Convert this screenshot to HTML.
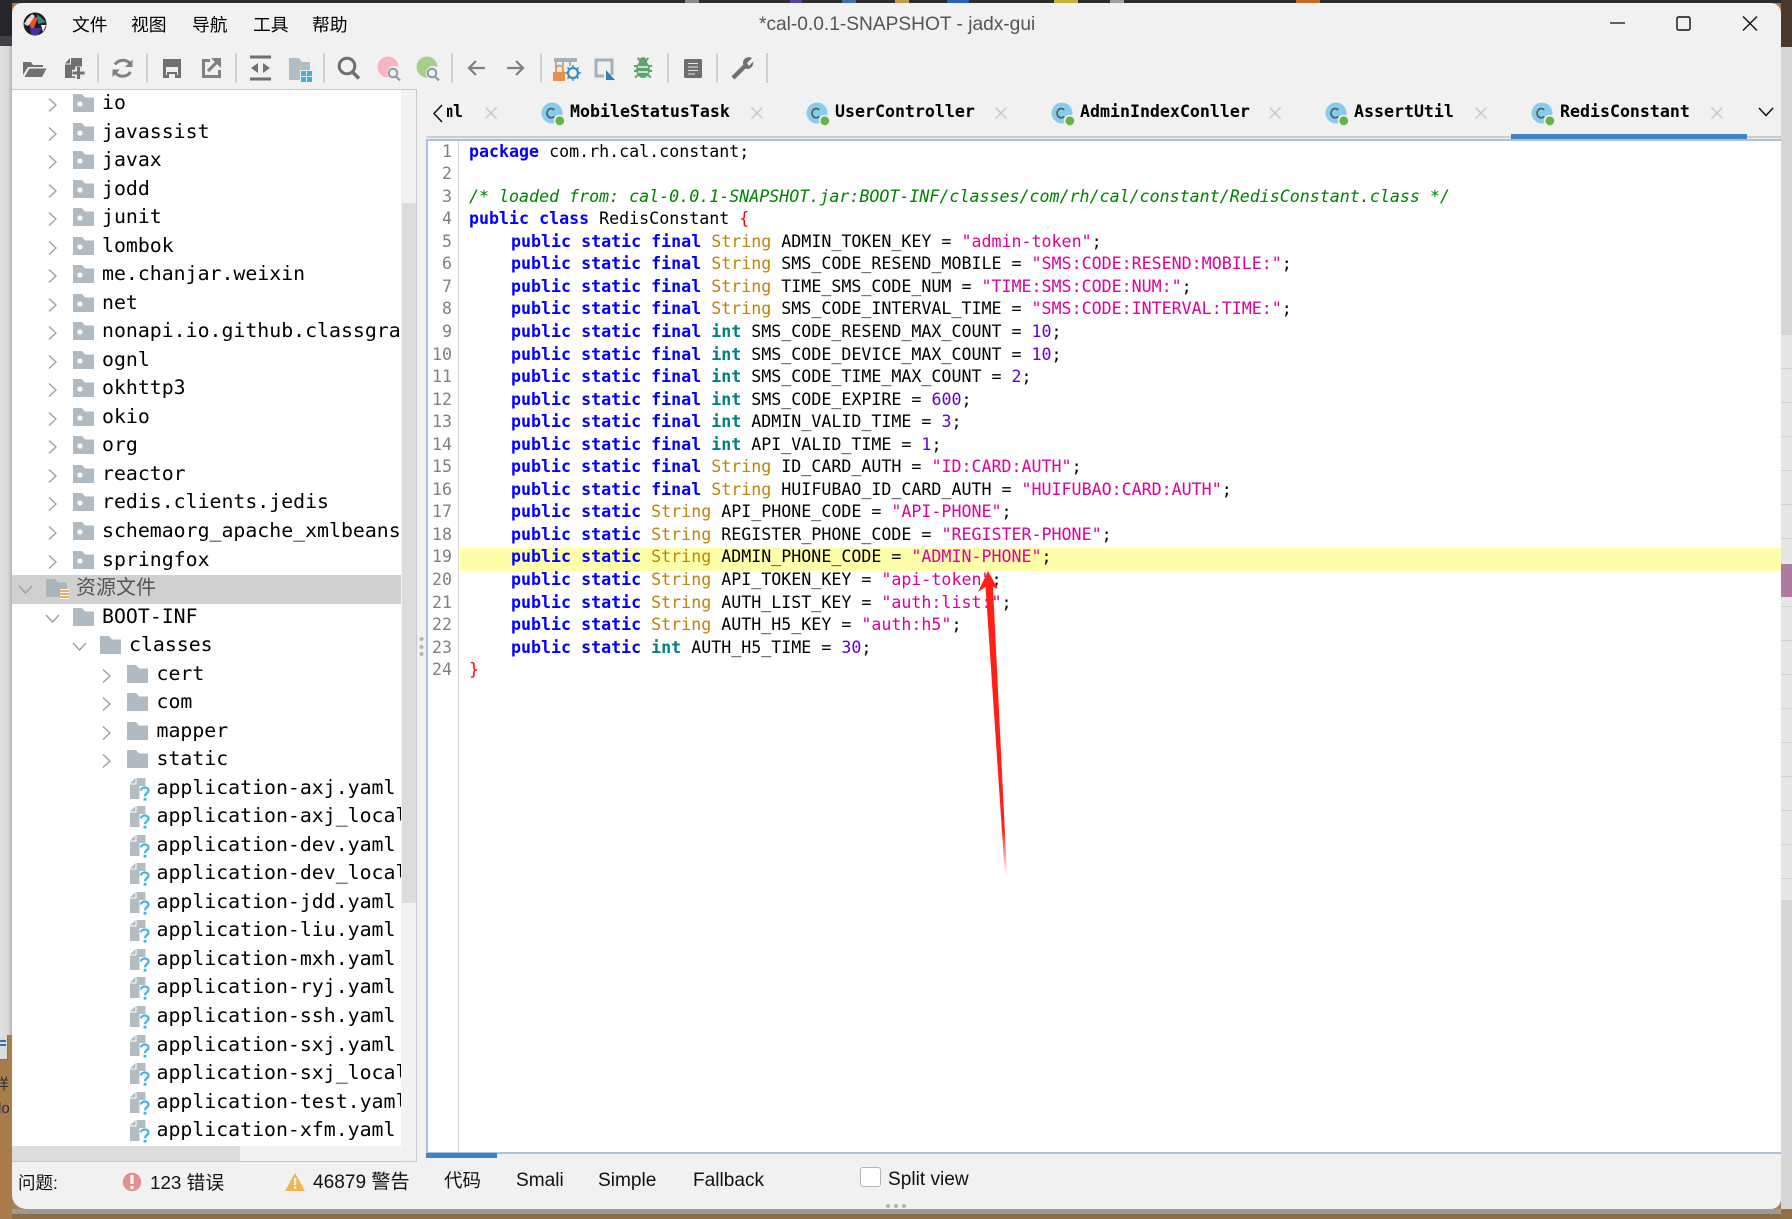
<!DOCTYPE html>
<html><head><meta charset="utf-8"><title>jadx-gui</title>
<style>
*{box-sizing:border-box}
html,body{margin:0;padding:0;width:1792px;height:1219px;overflow:hidden;background:#a97c4c}
body{position:relative;font-family:"Liberation Sans","Noto Sans CJK SC",sans-serif}
.a{position:absolute}
.t{position:absolute;white-space:pre;line-height:24px;color:#000}
#win{position:absolute;left:12px;top:3px;width:1769px;height:1206px;background:#f1f1f1;border-radius:10px 10px 10px 14px;overflow:hidden}
.m{font-size:17.8px;top:13px}
#tree{position:absolute;left:12px;top:90px;width:389px;height:1056px;background:#fff;overflow:hidden;font-family:"DejaVu Sans Mono",monospace;font-size:19.85px}
.r{position:absolute;left:0;width:389px;height:29px;line-height:29.4px;white-space:pre;color:#000}
.r span{position:absolute;top:0}
.r svg{position:absolute;top:0;left:0;width:160px;height:29px;overflow:visible}
#code{position:absolute;left:0;top:0.5px;font-family:"DejaVu Sans Mono",monospace;font-size:16.64px}
.l{position:absolute;left:469px;white-space:pre;line-height:22px;height:22px;color:#000}
.n{position:absolute;left:426px;width:26px;text-align:right;line-height:22px;height:22px;color:#808080;font-family:"DejaVu Sans Mono",monospace;font-size:16.6px}
.l i{font-style:normal;display:inline-block;width:42px}
.k{color:#0000ff;font-weight:bold}
.s{color:#b8860b}
.d{color:#008080;font-weight:bold}
.q{color:#dc009c}
.u{color:#6400c8}
.c{color:#008000;font-style:italic}
.b{color:#ff0000}
.tb{position:absolute;top:100px;font-family:"DejaVu Sans Mono",monospace;font-weight:bold;font-size:16.6px;line-height:24px;white-space:pre;color:#000}
.st{font-size:19.1px;color:#111}
</style></head><body>

<!-- wallpaper / surroundings -->
<div class="a" style="left:0;top:0;width:1792px;height:3px;background:#2b2b2e"></div>
<div class="a" style="left:685px;top:0;width:14px;height:3px;background:#8a8a8a"></div>
<div class="a" style="left:790px;top:0;width:12px;height:3px;background:#5a3fa0"></div>
<div class="a" style="left:842px;top:0;width:14px;height:3px;background:#3f6fa8"></div>
<div class="a" style="left:895px;top:0;width:14px;height:3px;background:#c09a50"></div>
<div class="a" style="left:947px;top:0;width:22px;height:3px;background:#2f60c0"></div>
<div class="a" style="left:1054px;top:0;width:24px;height:3px;background:#c8b040"></div>
<div class="a" style="left:1110px;top:0;width:14px;height:3px;background:#a0a0a0"></div>
<div class="a" style="left:1296px;top:0;width:24px;height:3px;background:#c46a28"></div>
<div class="a" style="left:0;top:0;width:12px;height:36px;background:#26262a"></div>
<div class="a" style="left:0;top:36px;width:12px;height:10px;background:#404044"></div>
<div class="a" style="left:0;top:46px;width:12px;height:989px;background:linear-gradient(90deg,#e2e2e2,#d6d6d6 70%,#b4b4b4)"></div>
<div class="a" style="left:0;top:1035px;width:8px;height:25px;background:#d8dde2;border-bottom:1px solid #777;border-right:1px solid #777"></div>
<div class="a" style="left:0;top:1040px;width:6px;height:2px;background:#3f6fa8"></div>
<div class="a" style="left:0;top:1044px;width:6px;height:2px;background:#3f6fa8"></div>
<div class="a" style="left:0;top:1073px;width:12px;height:48px;overflow:hidden;font-size:15px;line-height:24px;color:#26323c"><div style="margin-left:-6px">样</div><div style="margin-left:-7px">do</div></div>
<div class="a" style="left:1781px;top:0;width:11px;height:47px;background:#4a3a2c"></div>
<div class="a" style="left:1781px;top:47px;width:11px;height:1162px;background:#d6d6d6"></div>
<div class="a" style="left:1781px;top:335px;width:11px;height:565px;background:repeating-linear-gradient(180deg,#e6e6e6 0,#e6e6e6 33px,#d0d0d0 33px,#d0d0d0 34px)"></div>
<div class="a" style="left:1781px;top:564px;width:11px;height:33px;background:#ad7aa0"></div>
<div class="a" style="left:1781px;top:1209px;width:11px;height:10px;background:#8f7049"></div>
<div class="a" style="left:12px;top:1209px;width:1769px;height:5px;background:#9a9a98"></div>
<div class="a" style="left:12px;top:1214px;width:1769px;height:5px;background:#8d6d45"></div>

<div id="win"></div>

<!-- menu -->
<div class="t m" style="left:72px">文件</div>
<div class="t m" style="left:131px">视图</div>
<div class="t m" style="left:192px">导航</div>
<div class="t m" style="left:253px">工具</div>
<div class="t m" style="left:312px">帮助</div>
<div class="t" style="left:759px;top:13px;font-size:19.15px;color:#555">*cal-0.0.1-SNAPSHOT - jadx-gui</div>

<!-- panels -->
<div class="a" style="left:12px;top:89px;width:405px;height:1px;background:#c8c8c8"></div>
<div class="a" style="left:401px;top:90px;width:15px;height:1056px;background:#f3f3f3"></div>
<div class="a" style="left:402px;top:203px;width:14px;height:700px;background:#dcdcdc"></div>
<div class="a" style="left:416px;top:89px;width:1px;height:1073px;background:#c8c8c8"></div>
<div class="a" style="left:12px;top:1146px;width:389px;height:15px;background:#f3f3f3"></div>
<div class="a" style="left:12px;top:1146px;width:228px;height:15px;background:#dcdcdc"></div>
<div class="a" style="left:12px;top:1161px;width:405px;height:1px;background:#c8c8c8"></div>

<div id="tree">
<div class="r" style="top:-2px"><svg><use href="#chr" x="36"/><use href="#pk" x="61"/></svg><span style="left:90px">io</span></div>
<div class="r" style="top:26.5px"><svg><use href="#chr" x="36"/><use href="#pk" x="61"/></svg><span style="left:90px">javassist</span></div>
<div class="r" style="top:55.1px"><svg><use href="#chr" x="36"/><use href="#pk" x="61"/></svg><span style="left:90px">javax</span></div>
<div class="r" style="top:83.6px"><svg><use href="#chr" x="36"/><use href="#pk" x="61"/></svg><span style="left:90px">jodd</span></div>
<div class="r" style="top:112.1px"><svg><use href="#chr" x="36"/><use href="#pk" x="61"/></svg><span style="left:90px">junit</span></div>
<div class="r" style="top:140.7px"><svg><use href="#chr" x="36"/><use href="#pk" x="61"/></svg><span style="left:90px">lombok</span></div>
<div class="r" style="top:169.2px"><svg><use href="#chr" x="36"/><use href="#pk" x="61"/></svg><span style="left:90px">me.chanjar.weixin</span></div>
<div class="r" style="top:197.7px"><svg><use href="#chr" x="36"/><use href="#pk" x="61"/></svg><span style="left:90px">net</span></div>
<div class="r" style="top:226.2px"><svg><use href="#chr" x="36"/><use href="#pk" x="61"/></svg><span style="left:90px">nonapi.io.github.classgraph</span></div>
<div class="r" style="top:254.8px"><svg><use href="#chr" x="36"/><use href="#pk" x="61"/></svg><span style="left:90px">ognl</span></div>
<div class="r" style="top:283.3px"><svg><use href="#chr" x="36"/><use href="#pk" x="61"/></svg><span style="left:90px">okhttp3</span></div>
<div class="r" style="top:311.8px"><svg><use href="#chr" x="36"/><use href="#pk" x="61"/></svg><span style="left:90px">okio</span></div>
<div class="r" style="top:340.4px"><svg><use href="#chr" x="36"/><use href="#pk" x="61"/></svg><span style="left:90px">org</span></div>
<div class="r" style="top:368.9px"><svg><use href="#chr" x="36"/><use href="#pk" x="61"/></svg><span style="left:90px">reactor</span></div>
<div class="r" style="top:397.4px"><svg><use href="#chr" x="36"/><use href="#pk" x="61"/></svg><span style="left:90px">redis.clients.jedis</span></div>
<div class="r" style="top:426px"><svg><use href="#chr" x="36"/><use href="#pk" x="61"/></svg><span style="left:90px">schemaorg_apache_xmlbeans</span></div>
<div class="r" style="top:454.5px"><svg><use href="#chr" x="36"/><use href="#pk" x="61"/></svg><span style="left:90px">springfox</span></div>
<div class="a" style="left:0;top:485px;width:389px;height:29px;background:#d0d0d0"></div>
<div class="r" style="top:483px"><svg><use href="#chd" x="7"/><use href="#res" x="34"/></svg><span style="left:64px;font-family:'Liberation Sans','Noto Sans CJK SC',sans-serif;font-size:20px;color:#555;line-height:30px">资源文件</span></div>
<div class="r" style="top:511.5px"><svg><use href="#chd" x="34"/><use href="#fd" x="61"/></svg><span style="left:90px">BOOT-INF</span></div>
<div class="r" style="top:540.1px"><svg><use href="#chd" x="61"/><use href="#fd" x="88"/></svg><span style="left:117px">classes</span></div>
<div class="r" style="top:568.6px"><svg><use href="#chr" x="90"/><use href="#fd" x="115"/></svg><span style="left:144.5px">cert</span></div>
<div class="r" style="top:597.1px"><svg><use href="#chr" x="90"/><use href="#fd" x="115"/></svg><span style="left:144.5px">com</span></div>
<div class="r" style="top:625.7px"><svg><use href="#chr" x="90"/><use href="#fd" x="115"/></svg><span style="left:144.5px">mapper</span></div>
<div class="r" style="top:654.2px"><svg><use href="#chr" x="90"/><use href="#fd" x="115"/></svg><span style="left:144.5px">static</span></div>
<div class="r" style="top:682.7px"><svg><use href="#fl" x="118"/></svg><span style="left:144.5px">application-axj.yaml</span></div>
<div class="r" style="top:711.3px"><svg><use href="#fl" x="118"/></svg><span style="left:144.5px">application-axj_local.yaml</span></div>
<div class="r" style="top:739.8px"><svg><use href="#fl" x="118"/></svg><span style="left:144.5px">application-dev.yaml</span></div>
<div class="r" style="top:768.3px"><svg><use href="#fl" x="118"/></svg><span style="left:144.5px">application-dev_local.yaml</span></div>
<div class="r" style="top:796.8px"><svg><use href="#fl" x="118"/></svg><span style="left:144.5px">application-jdd.yaml</span></div>
<div class="r" style="top:825.4px"><svg><use href="#fl" x="118"/></svg><span style="left:144.5px">application-liu.yaml</span></div>
<div class="r" style="top:853.9px"><svg><use href="#fl" x="118"/></svg><span style="left:144.5px">application-mxh.yaml</span></div>
<div class="r" style="top:882.4px"><svg><use href="#fl" x="118"/></svg><span style="left:144.5px">application-ryj.yaml</span></div>
<div class="r" style="top:911px"><svg><use href="#fl" x="118"/></svg><span style="left:144.5px">application-ssh.yaml</span></div>
<div class="r" style="top:939.5px"><svg><use href="#fl" x="118"/></svg><span style="left:144.5px">application-sxj.yaml</span></div>
<div class="r" style="top:968px"><svg><use href="#fl" x="118"/></svg><span style="left:144.5px">application-sxj_local.yaml</span></div>
<div class="r" style="top:996.6px"><svg><use href="#fl" x="118"/></svg><span style="left:144.5px">application-test.yaml</span></div>
<div class="r" style="top:1025.1px"><svg><use href="#fl" x="118"/></svg><span style="left:144.5px">application-xfm.yaml</span></div>
</div>

<!-- code area -->
<div class="a" style="left:426px;top:139px;width:1355px;height:1015px;background:#fff;border:1px solid #a9c2dc;border-width:2px 0 2px 2px"></div>
<div class="a" style="left:458px;top:141px;width:1px;height:1011px;background:#d8d8d8"></div>
<div class="a" style="left:460px;top:548px;width:1321px;height:23px;background:#ffffaa"></div>
<div class="a" style="left:426px;top:1153px;width:71px;height:5px;background:#3f83c6"></div>

<div id="code">
<div class="n" style="top:140px">1</div><div class="l" style="top:140px"><span class="k">package</span> com.rh.cal.constant;</div>
<div class="n" style="top:162.6px">2</div>
<div class="n" style="top:185.1px">3</div><div class="l" style="top:185.1px"><span class="c">/* loaded from: cal-0.0.1-SNAPSHOT.jar:BOOT-INF/classes/com/rh/cal/constant/RedisConstant.class */</span></div>
<div class="n" style="top:207.7px">4</div><div class="l" style="top:207.7px"><span class="k">public</span> <span class="k">class</span> RedisConstant <span class="b">{</span></div>
<div class="n" style="top:230.2px">5</div><div class="l" style="top:230.2px"><i></i><span class="k">public</span> <span class="k">static</span> <span class="k">final</span> <span class="s">String</span> ADMIN_TOKEN_KEY = <span class="q">"admin-token"</span>;</div>
<div class="n" style="top:252.8px">6</div><div class="l" style="top:252.8px"><i></i><span class="k">public</span> <span class="k">static</span> <span class="k">final</span> <span class="s">String</span> SMS_CODE_RESEND_MOBILE = <span class="q">"SMS:CODE:RESEND:MOBILE:"</span>;</div>
<div class="n" style="top:275.3px">7</div><div class="l" style="top:275.3px"><i></i><span class="k">public</span> <span class="k">static</span> <span class="k">final</span> <span class="s">String</span> TIME_SMS_CODE_NUM = <span class="q">"TIME:SMS:CODE:NUM:"</span>;</div>
<div class="n" style="top:297.9px">8</div><div class="l" style="top:297.9px"><i></i><span class="k">public</span> <span class="k">static</span> <span class="k">final</span> <span class="s">String</span> SMS_CODE_INTERVAL_TIME = <span class="q">"SMS:CODE:INTERVAL:TIME:"</span>;</div>
<div class="n" style="top:320.4px">9</div><div class="l" style="top:320.4px"><i></i><span class="k">public</span> <span class="k">static</span> <span class="k">final</span> <span class="d">int</span> SMS_CODE_RESEND_MAX_COUNT = <span class="u">10</span>;</div>
<div class="n" style="top:343px">10</div><div class="l" style="top:343px"><i></i><span class="k">public</span> <span class="k">static</span> <span class="k">final</span> <span class="d">int</span> SMS_CODE_DEVICE_MAX_COUNT = <span class="u">10</span>;</div>
<div class="n" style="top:365.5px">11</div><div class="l" style="top:365.5px"><i></i><span class="k">public</span> <span class="k">static</span> <span class="k">final</span> <span class="d">int</span> SMS_CODE_TIME_MAX_COUNT = <span class="u">2</span>;</div>
<div class="n" style="top:388.1px">12</div><div class="l" style="top:388.1px"><i></i><span class="k">public</span> <span class="k">static</span> <span class="k">final</span> <span class="d">int</span> SMS_CODE_EXPIRE = <span class="u">600</span>;</div>
<div class="n" style="top:410.6px">13</div><div class="l" style="top:410.6px"><i></i><span class="k">public</span> <span class="k">static</span> <span class="k">final</span> <span class="d">int</span> ADMIN_VALID_TIME = <span class="u">3</span>;</div>
<div class="n" style="top:433.2px">14</div><div class="l" style="top:433.2px"><i></i><span class="k">public</span> <span class="k">static</span> <span class="k">final</span> <span class="d">int</span> API_VALID_TIME = <span class="u">1</span>;</div>
<div class="n" style="top:455.7px">15</div><div class="l" style="top:455.7px"><i></i><span class="k">public</span> <span class="k">static</span> <span class="k">final</span> <span class="s">String</span> ID_CARD_AUTH = <span class="q">"ID:CARD:AUTH"</span>;</div>
<div class="n" style="top:478.3px">16</div><div class="l" style="top:478.3px"><i></i><span class="k">public</span> <span class="k">static</span> <span class="k">final</span> <span class="s">String</span> HUIFUBAO_ID_CARD_AUTH = <span class="q">"HUIFUBAO:CARD:AUTH"</span>;</div>
<div class="n" style="top:500.8px">17</div><div class="l" style="top:500.8px"><i></i><span class="k">public</span> <span class="k">static</span> <span class="s">String</span> API_PHONE_CODE = <span class="q">"API-PHONE"</span>;</div>
<div class="n" style="top:523.4px">18</div><div class="l" style="top:523.4px"><i></i><span class="k">public</span> <span class="k">static</span> <span class="s">String</span> REGISTER_PHONE_CODE = <span class="q">"REGISTER-PHONE"</span>;</div>
<div class="n" style="top:545.9px">19</div><div class="l" style="top:545.9px"><i></i><span class="k">public</span> <span class="k">static</span> <span class="s">String</span> ADMIN_PHONE_CODE = <span class="q">"ADMIN-PHONE"</span>;</div>
<div class="n" style="top:568.5px">20</div><div class="l" style="top:568.5px"><i></i><span class="k">public</span> <span class="k">static</span> <span class="s">String</span> API_TOKEN_KEY = <span class="q">"api-token"</span>;</div>
<div class="n" style="top:591px">21</div><div class="l" style="top:591px"><i></i><span class="k">public</span> <span class="k">static</span> <span class="s">String</span> AUTH_LIST_KEY = <span class="q">"auth:list:"</span>;</div>
<div class="n" style="top:613.6px">22</div><div class="l" style="top:613.6px"><i></i><span class="k">public</span> <span class="k">static</span> <span class="s">String</span> AUTH_H5_KEY = <span class="q">"auth:h5"</span>;</div>
<div class="n" style="top:636.1px">23</div><div class="l" style="top:636.1px"><i></i><span class="k">public</span> <span class="k">static</span> <span class="d">int</span> AUTH_H5_TIME = <span class="u">30</span>;</div>
<div class="n" style="top:658.7px">24</div><div class="l" style="top:658.7px"><span class="b">}</span></div>
</div>

<!-- tabs -->
<div class="a" style="left:447px;top:100px;width:16px;height:24px;overflow:hidden"><div class="tb" style="top:0;left:-4px">ml</div></div>
<div class="tb" style="left:570px">MobileStatusTask</div>
<div class="tb" style="left:835px">UserController</div>
<div class="tb" style="left:1080px">AdminIndexConller</div>
<div class="tb" style="left:1354px">AssertUtil</div>
<div class="tb" style="left:1560px">RedisConstant</div>
<div class="a" style="left:1511px;top:134px;width:236px;height:5px;background:#3f83c6"></div>

<!-- bottom -->
<div class="t st" style="left:444px;top:1169px;font-size:18.5px">代码</div>
<div class="t st" style="left:516px;top:1169px">Smali</div>
<div class="t st" style="left:598px;top:1169px">Simple</div>
<div class="t st" style="left:693px;top:1169px">Fallback</div>
<div class="a" style="left:860px;top:1167px;width:21px;height:20px;background:#fff;border:1.5px solid #b4b4b4;border-radius:3px"></div>
<div class="t st" style="left:888px;top:1168px">Split view</div>
<div class="t st" style="left:18px;top:1171px;font-size:17.5px">问题:</div>
<div class="t st" style="left:150px;top:1171px;font-size:18.8px">123 错误</div>
<div class="t st" style="left:313px;top:1171px;font-size:19.1px">46879 警告</div>

<!-- vector icons -->
<svg class="a" style="left:0;top:0" width="1792" height="1219" viewBox="0 0 1792 1219" fill="none">
<defs>
<g id="cl"><circle cx="0" cy="0" r="10.5" fill="#87cdea"/><path d="M3.2-3A4.2 4.6 0 1 0 3.2 3.4" stroke="#4c5a63" stroke-width="1.6" fill="none" transform="translate(-1 0)"/><circle cx="7.5" cy="7.5" r="5.6" fill="#f1f1f1"/><circle cx="7.8" cy="7.8" r="4.4" fill="#62b543"/></g>
<g id="xx"><path d="M-5.5-5.5L5.5 5.5M5.5-5.5L-5.5 5.5" stroke="#c9c9c9" stroke-width="1.5"/></g>
<g id="chr"><path d="M1 10.5L8 17L1 23.5" fill="none" stroke="#9c9c9c" stroke-width="1.3"/></g>
<g id="chd"><path d="M0 13L6.5 20L13 13" fill="none" stroke="#9c9c9c" stroke-width="1.3"/></g>
<g id="fd"><path d="M0 6H9L12 9.5H21V24H0Z" fill="#afbac3"/></g>
<g id="pk"><path d="M0 6H9L12 9.5H21V24H0Z" fill="#afbac3"/><circle cx="7" cy="16" r="2.6" fill="#fff"/></g>
<g id="res"><path d="M0 6H9L12 9.5H21V24H0Z" fill="#a8b5bf"/><rect x="14" y="16" width="9" height="10" fill="#fff"/><path d="M14 18H23M14 21H23M14 24H23" stroke="#e3a248" stroke-width="1.7"/></g>
<g id="fl"><path d="M6.5 5H15.5V26H0V11.5H6.5Z" fill="#b3bcc3"/><path d="M0 10.5L5.5 5V10.5Z" fill="#b3bcc3"/><rect x="9.5" y="13" width="11" height="15" fill="#fff"/><path d="M11 17.5C11 13.5 18.5 13.5 18.5 17.5C18.5 20.5 15 20 15 23.3" stroke="#3fb4e6" stroke-width="2.2" fill="none"/><rect x="13.6" y="24.8" width="2.8" height="2.8" fill="#3fb4e6"/></g>
<linearGradient id="fade" x1="0" y1="0" x2="0" y2="1"><stop offset="0" stop-color="#ff2016"/><stop offset=".85" stop-color="#ff2016"/><stop offset="1" stop-color="#ff2016" stop-opacity="0"/></linearGradient>
</defs>

<!-- logo -->
<g>
<circle cx="35" cy="24" r="11.5" fill="#1d1a28"/>
<path d="M26 19L38 17L33 31Z" fill="#e8502a"/>
<path d="M37 14L46 22L38 24Z" fill="#2a8f78"/>
<path d="M30 28L42 28L38 35L31 35Z" fill="#4a2ea0"/>
<path d="M24 24L28 18L32 14L35 16L28 26Z" fill="#f4f4f4" opacity=".85"/>
<path d="M41 25L46 25L43 32Z" fill="#f3f3f3"/>
</g>

<!-- window controls -->
<path d="M1610 23H1625" stroke="#111" stroke-width="1.3"/>
<rect x="1677" y="17" width="13" height="13" rx="1.5" stroke="#111" stroke-width="1.4"/>
<path d="M1743 16.5L1757 30.5M1757 16.5L1743 30.5" stroke="#111" stroke-width="1.4"/>

<!-- toolbar separators -->
<g fill="#d0d0d0"><rect x="97" y="53" width="2" height="30"/><rect x="146" y="53" width="2" height="30"/><rect x="235" y="53" width="2" height="30"/><rect x="323" y="53" width="2" height="30"/><rect x="451" y="53" width="2" height="30"/><rect x="540" y="53" width="2" height="30"/><rect x="667" y="53" width="2" height="30"/><rect x="716" y="53" width="2" height="30"/><rect x="766" y="53" width="2" height="30"/></g>

<!-- open -->
<path d="M23 75V62H31L33 65H43V67H28Z" fill="#707070"/>
<path d="M29.5 68.5H46.5L42 77H24.5Z" fill="#707070"/>
<!-- new -->
<path d="M71 58H82V78H65V64.5H71Z" fill="#707070"/><path d="M65 63.5L70 58V63.5Z" fill="#707070"/>
<path d="M72 73H85M78.5 66.5V80" stroke="#f1f1f1" stroke-width="6.5"/>
<path d="M72.5 73H84.5M78.5 67V79" stroke="#707070" stroke-width="3"/>
<!-- refresh -->
<path d="M115 64.5A9.5 9.5 0 0 1 130 63.5" stroke="#808080" stroke-width="3"/>
<path d="M130.5 72A9.5 9.5 0 0 1 115.5 73" stroke="#808080" stroke-width="3"/>
<path d="M125 67H132.5V59.5Z" fill="#808080"/><path d="M120 69.5H112.5V77Z" fill="#808080"/>
<!-- save -->
<path d="M164.5 60.5H179.5V76.5H164.5Z" stroke="#707070" stroke-width="3" fill="none"/>
<rect x="163" y="59" width="18" height="8" fill="#707070"/><rect x="167" y="72" width="10" height="6" fill="#707070"/><rect x="169" y="74" width="6" height="4" fill="#f1f1f1"/>
<!-- export -->
<path d="M210 60.5H203.5V76.5H219.5V70" stroke="#808080" stroke-width="3" fill="none"/>
<path d="M208 71L218 61" stroke="#808080" stroke-width="3.2"/><path d="M211 58H221V68Z" fill="#808080"/>
<!-- sync -->
<path d="M250 57H271M250 79H271" stroke="#707070" stroke-width="3"/>
<path d="M258 63L251 68L258 73ZM263 63L270 68L263 73Z" fill="#707070"/>
<!-- folder pkg -->
<path d="M289 58H299L302 62H310V80H289Z" fill="#b2bdc5"/>
<rect x="300" y="70" width="13" height="12" fill="#f1f1f1"/>
<g fill="#3fb0e6"><rect x="301" y="71" width="5" height="5"/><rect x="307" y="71" width="5" height="5"/><rect x="301" y="77" width="5" height="5"/><rect x="307" y="77" width="5" height="5"/></g>
<!-- search -->
<circle cx="347" cy="66" r="7.8" stroke="#6e6e6e" stroke-width="3"/><path d="M352.5 72L359 78.5" stroke="#6e6e6e" stroke-width="3.4"/>
<!-- pink / green search -->
<circle cx="388" cy="67" r="10.5" fill="#f7b4c3"/><circle cx="394" cy="73" r="7" fill="#f1f1f1"/><circle cx="393" cy="73" r="4.3" stroke="#8a9aa8" stroke-width="2"/><path d="M396 76.5L400 80.5" stroke="#8a9aa8" stroke-width="2.2"/>
<circle cx="427" cy="67" r="10.5" fill="#a4d08a"/><circle cx="433" cy="73" r="7" fill="#f1f1f1"/><circle cx="432" cy="73" r="4.3" stroke="#8a9aa8" stroke-width="2"/><path d="M435 76.5L439 80.5" stroke="#8a9aa8" stroke-width="2.2"/>
<!-- arrows -->
<path d="M485 68H469M476 61L469 68L476 75" stroke="#808080" stroke-width="2.2"/>
<path d="M507 68H523M516 61L523 68L516 75" stroke="#808080" stroke-width="2.2"/>
<!-- lock gear -->
<rect x="554" y="58" width="23" height="4" fill="#a5b0b8"/><path d="M556 62V68M563 62V66M570 62V66" stroke="#a5b0b8" stroke-width="2"/>
<path d="M556 72V69A3.5 3.5 0 0 1 563 69V72" stroke="#e88f4a" stroke-width="1.8"/><rect x="553" y="72" width="12" height="9" fill="#ea8f4a"/>
<circle cx="573" cy="73" r="5" stroke="#3d8fc2" stroke-width="2.2"/><path d="M573 65V68M573 78V81M565 73H568M578 73H581M567.5 67.5L569.5 69.5M578.5 78.5L576.5 76.5M578.5 67.5L576.5 69.5M567.5 78.5L569.5 76.5" stroke="#3d8fc2" stroke-width="1.6"/>
<!-- decompile -->
<path d="M612 75V60H596V76H604" stroke="#a5b0b8" stroke-width="3"/>
<path d="M606 70L615 80H606Z" fill="#2f7fb0"/>
<!-- bug -->
<ellipse cx="643" cy="69.5" rx="6.8" ry="8.5" fill="#5ba668"/><circle cx="643" cy="61.5" r="4.2" fill="#5ba668"/>
<path d="M637.5 58L640.5 60.5M648.5 58L645.5 60.5M634 66H637M649 66H652M634 71H637M649 71H652M635 77.5L638 75M651 77.5L648 75" stroke="#5ba668" stroke-width="2"/>
<path d="M638 67H648M638 72H648" stroke="#f1f1f1" stroke-width="1.4"/>
<!-- log -->
<rect x="684" y="59" width="18" height="19" rx="1.5" fill="#6e6e6e"/><path d="M688 63.5H698M688 67H698M688 70.5H698M688 74H695" stroke="#e8e8e8" stroke-width="1.1"/>
<!-- wrench -->
<path d="M733 78L746 65" stroke="#707070" stroke-width="4.4"/><path d="M743 64A6 6 0 0 1 752 58L747 63L749 66L753 61.5A6 6 0 0 1 746.5 69Z" fill="#707070"/>

<!-- tab chrome -->
<path d="M442 105L434 113.5L442 122" stroke="#111" stroke-width="1.5"/>
<path d="M1759 109L1766 116.5L1773 109" stroke="#111" stroke-width="1.5" fill="none" transform="translate(0 -1)"/>
<use href="#xx" x="491" y="113"/><use href="#xx" x="757" y="113"/><use href="#xx" x="1001" y="113"/><use href="#xx" x="1275" y="113"/><use href="#xx" x="1481" y="113"/><use href="#xx" x="1717" y="113"/>
<use href="#cl" x="552" y="113"/><use href="#cl" x="817" y="113"/><use href="#cl" x="1062" y="113"/><use href="#cl" x="1336" y="113"/><use href="#cl" x="1542" y="113"/>
<rect x="427" y="136" width="1084" height="2" fill="#c8c8c8" opacity=".9"/>
<rect x="1747" y="136" width="34" height="2" fill="#c8c8c8" opacity=".9"/>

<!-- splitter dots -->
<g fill="#b4b4b4"><circle cx="421.5" cy="639" r="2"/><circle cx="421.5" cy="647" r="2"/><circle cx="421.5" cy="654" r="2"/><circle cx="888" cy="1206" r="2"/><circle cx="896" cy="1206" r="2"/><circle cx="904" cy="1206" r="2"/></g>

<!-- status icons -->
<circle cx="132" cy="1182" r="9.2" fill="#e58e8e"/><rect x="130.4" y="1175" width="3.2" height="9" fill="#fff"/><rect x="130.4" y="1186" width="3.2" height="3" fill="#fff"/>
<path d="M295 1173L305 1191H285Z" fill="#f6b24e"/><rect x="294" y="1178" width="2.2" height="7" fill="#fff"/><rect x="294" y="1186.5" width="2.2" height="2.2" fill="#fff"/>

<!-- red arrow -->
<path d="M988 571L998 589L993 587L1007 876L1005 876L985.5 587L978 592Z" fill="url(#fade)"/>
</svg>
</body></html>
